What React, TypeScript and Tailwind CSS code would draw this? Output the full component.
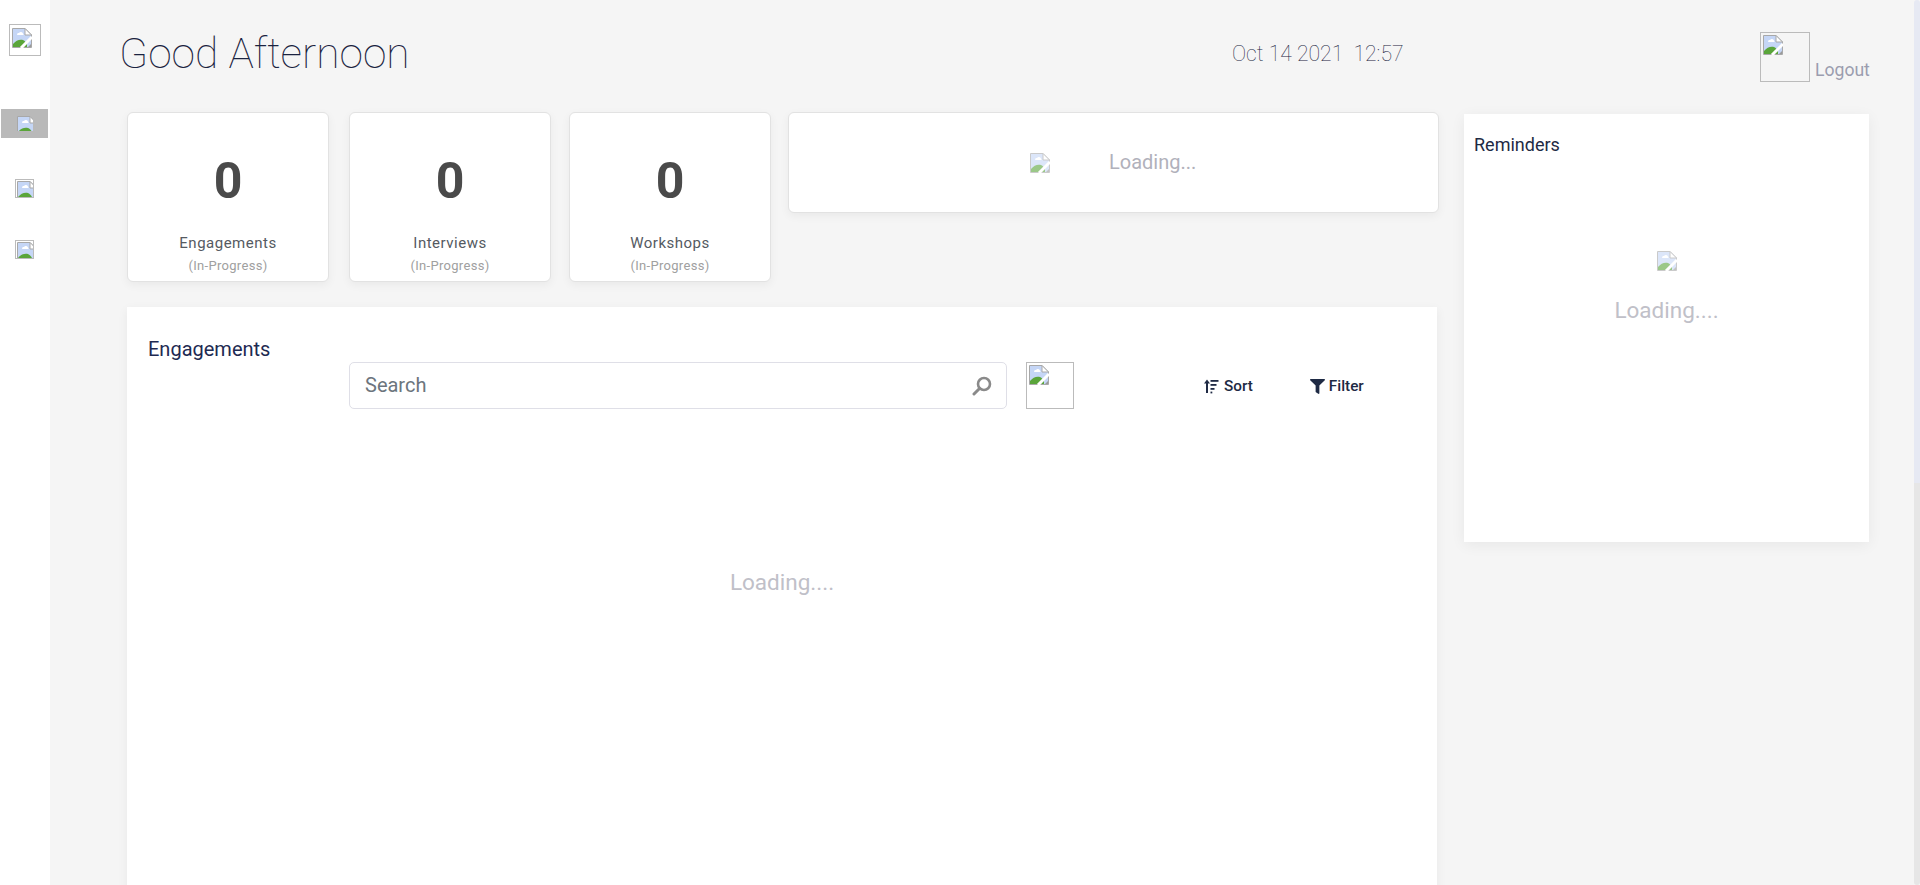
import React from "react";
import { FaFilter } from "react-icons/fa";

function Broken({ size = 20, faded = false, tear = true }: { size?: number; faded?: boolean; tear?: boolean }) {
  return (
    <svg width={size} height={size} viewBox="0 0 20 20" className={faded ? "block shrink-0 opacity-60" : "block shrink-0"}>
      <path d="M0.5 0.5H13L19.5 7V19.5H0.5Z" fill="#c5d6f6" stroke="#a8a8a8" />
      <path d="M13 0.5V7H19.5Z" fill="#fff" stroke="#a8a8a8" />
      <path d="M5 6.5a1.6 1.6 0 0 1 2-1.5a2.2 2.2 0 0 1 4 0.5a1.3 1.3 0 0 1 0.5 1.5H5.5a1 1 0 0 1-0.5-0.5Z" fill="#fff" />
      <path d="M1 19V16C4 12 8 11 11 12C13 13 14 14 15 16L15 19Z" fill="#5aa53a" />
      {tear && <path d="M20 9L9 20" stroke="#fff" strokeWidth="3" />}
      {tear && <path d="M16 19H19V16Z" fill="#9a9a9a" />}
    </svg>
  );
}

function NavIcon({ active = false }: { active?: boolean }) {
  if (active) {
    return (
      <div className="w-[47px] h-[29px] ml-px bg-[#b9b9b9] flex justify-center pt-[7px]">
        <div className="w-4 h-[15px] overflow-hidden">
          <Broken tear={false} />
        </div>
      </div>
    );
  }
  return (
    <div className="w-[19px] h-[19px] ml-[15px] border border-[#bbbbbb] overflow-hidden pl-px pt-px">
      <Broken tear={false} />
    </div>
  );
}

function Stat({ label, className }: { label: string; className: string }) {
  return (
    <div className={`w-[202px] h-[170px] shrink-0 bg-white border border-[#e2e2e2] rounded-md shadow-[0_3px_10px_rgba(0,0,0,0.05)] flex flex-col items-center ${className}`}>
      <div className="mt-[40px] h-[56px] text-[50px] leading-[56px] font-bold text-[#4a4a4a]">0</div>
      <div className="mt-[24px] h-[20px] text-[15px] leading-[20px] tracking-[0.5px] text-[#555a62]">{label}</div>
      <div className="mt-[4px] h-[18px] text-[13px] leading-[18px] tracking-[0.3px] text-[#a0a0a0]">(In-Progress)</div>
    </div>
  );
}

function SortIcon() {
  return (
    <svg width="15" height="15" viewBox="0 0 15 15" className="block shrink-0" fill="#1f2a44">
      <path d="M3 0.5L6 4.5H4V14H2V4.5H0Z" />
      <rect x="6.5" y="1" width="8" height="1.8" />
      <rect x="6.5" y="5" width="6" height="1.8" />
      <rect x="6.5" y="9" width="4" height="1.8" />
      <rect x="6.5" y="12.6" width="1.8" height="1.8" />
    </svg>
  );
}

function SearchIcon() {
  return (
    <svg width="20" height="20" viewBox="0 0 20 20" className="block shrink-0" fill="none" stroke="#8a8a8a">
      <circle cx="12" cy="8" r="6" strokeWidth="2.6" />
      <path d="M7.5 12.5L2 18" strokeWidth="3" strokeLinecap="round" />
    </svg>
  );
}

export default function App() {
  return (
    <div className="flex h-[885px] w-[1920px] overflow-hidden bg-[#f5f5f5] font-['Roboto',sans-serif]">
      <aside className="w-[50px] shrink-0 bg-white flex flex-col">
        <div className="ml-[9px] mt-[24px] w-8 h-8 border border-[#bbbbbb] pl-[2px] pt-[3px] overflow-hidden">
          <Broken />
        </div>
        <div className="mt-[53px]"><NavIcon active /></div>
        <div className="mt-[41px]"><NavIcon /></div>
        <div className="mt-[42px]"><NavIcon /></div>
      </aside>

      <main className="flex-1 min-w-0">
        <header className="h-[112px] flex items-start">
          <h1 className="ml-[69px] mt-[28px] w-[1042px] shrink-0 text-[42.5px] leading-[52px] font-thin text-[#1a2340]">Good Afternoon</h1>
          <div className="mt-[42px] ml-[71px] w-[300px] shrink-0 text-[21.2px] leading-[24px] font-thin text-[#1a2340] whitespace-pre">Oct 14 2021  12:57</div>
          <div className="ml-[228px] mt-[32px] flex items-end shrink-0">
            <div className="w-[50px] h-[50px] border border-[#bbbbbb] pl-[2px] pt-[2px] overflow-hidden">
              <Broken />
            </div>
            <span className="ml-[5px] text-[17.6px] leading-[24px] text-[#9b9daf]">Logout</span>
          </div>
        </header>

        <div className="flex items-start">
          <div className="ml-[77px] w-[1312px] shrink-0">
            <div className="flex items-start">
              <Stat label="Engagements" className="" />
              <Stat label="Interviews" className="ml-[20px]" />
              <Stat label="Workshops" className="ml-[18px]" />
              <div className="ml-[17px] w-[651px] h-[101px] shrink-0 bg-white border border-[#e2e2e2] rounded-md shadow-[0_3px_10px_rgba(0,0,0,0.05)] flex items-center pl-[241px]">
                <Broken faded />
                <span className="ml-[59px] text-[20px] text-[#b1b1bb] pb-[2px]">Loading...</span>
              </div>
            </div>
            <section className="mt-[25px] w-[1310px] h-[700px] bg-white shadow-[0_3px_10px_rgba(0,0,0,0.06)] flex flex-col">
              <div className="flex items-start pl-[21px] pt-[28px]">
                <div className="w-[201px] text-[20px] leading-[28px] text-[#1e2a52]">Engagements</div>
                <div className="mt-[27px] w-[658px] h-[47px] border border-[#dfdfe7] rounded-[5px] flex items-center justify-between pl-[15px] pr-[14px]">
                  <span className="text-[20px] text-[#6c757d] pb-[2px]">Search</span>
                  <SearchIcon />
                </div>
                <div className="mt-[27px] ml-[19px] w-[48px] h-[47px] border border-[#bbbbbb] pl-[2px] pt-[2px] overflow-hidden">
                  <Broken />
                </div>
                <div className="mt-[42px] ml-[130px] flex items-center gap-[5px] text-[15.3px] leading-[18px] font-medium text-[#1e2a44]">
                  <SortIcon />
                  <span>Sort</span>
                </div>
                <div className="mt-[42px] ml-[57px] flex items-center gap-[4px] text-[15.3px] leading-[18px] font-medium text-[#1e2a44]">
                  <FaFilter size={15} color="#1e2a44" />
                  <span>Filter</span>
                </div>
              </div>
              <div className="mt-[157px] text-center text-[22.5px] leading-[32px] text-[#c0c0c8]">Loading....</div>
            </section>
          </div>

          <aside className="ml-[25px] mt-[2px] w-[405px] h-[428px] bg-white shadow-[0_3px_14px_rgba(0,0,0,0.06)] flex flex-col items-center">
            <div className="self-start ml-[10px] mt-[18px] text-[18px] leading-[26px] text-[#1e2a44]">Reminders</div>
            <div className="mt-[93px]"><Broken faded /></div>
            <div className="mt-[23px] text-[22.5px] leading-[32px] text-[#c0c0c8]">Loading....</div>
          </aside>
        </div>
      </main>

      <div className="w-[6px] shrink-0 flex flex-col">
        <div className="h-[483px] bg-[#e6e9f3] rounded-t-sm" />
        <div className="flex-1 bg-[#e6e6e6] rounded-b-sm" />
      </div>
    </div>
  );
}
